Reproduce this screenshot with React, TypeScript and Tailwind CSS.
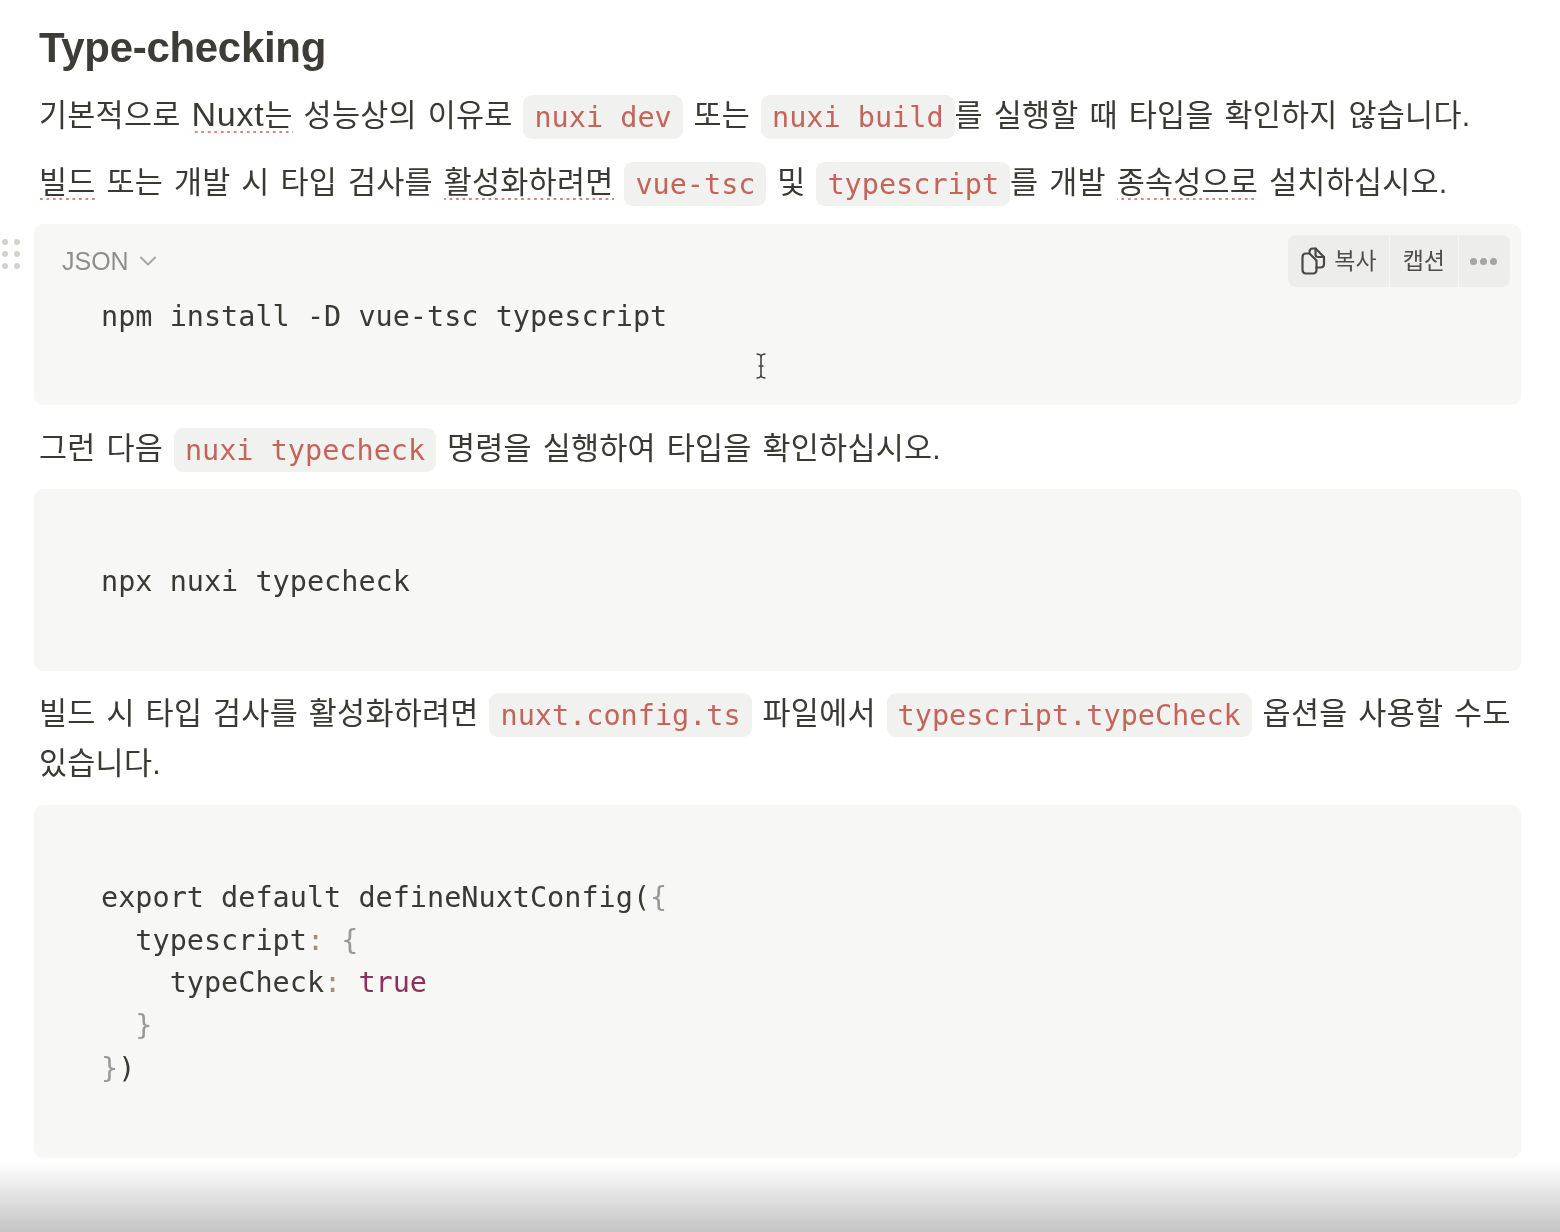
import React from "react";

const KR = "font-['Liberation_Sans','Noto_Sans_CJK_KR',sans-serif]";

function C({ children }: { children: React.ReactNode }) {
  return (
    <code className="align-[-1px] font-['DejaVu_Sans_Mono','Liberation_Mono',monospace] text-[28.5px] text-[#c4655c] bg-[#f1f1ef] rounded-[9px] px-[11px] pt-[6px] pb-[5px] leading-[34px] tracking-normal [word-spacing:0]">
      {children}
    </code>
  );
}

function S({ children }: { children: React.ReactNode }) {
  return (
    <span className="pb-[2px] bg-[radial-gradient(circle,#e0837a_1.2px,transparent_1.5px)] bg-[length:6.5px_4px] bg-repeat-x bg-bottom">
      {children}
    </span>
  );
}

function L({ children }: { children: React.ReactNode }) {
  return <span className="text-[34px] tracking-[0.8px]">{children}</span>;
}

function Para({ className, children }: { className: string; children: React.ReactNode }) {
  return (
    <p className={`${KR} px-[5px] text-[30.5px] leading-[50px] text-[#3a3934] tracking-[0.25px] [word-spacing:2.1px] ${className}`}>
      {children}
    </p>
  );
}

function CopyIcon() {
  return (
    <svg width="26" height="28" viewBox="0 0 26 28" fill="none" stroke="#4a4843" strokeWidth="2.2" strokeLinejoin="round" strokeLinecap="round">
      <path d="M9.5 6.5H6C4 6.5 2.5 8 2.5 10V22.5C2.5 25 4 26.5 6 26.5H13C15 26.5 16.5 25 16.5 22.5V20.5" />
      <path d="M9.5 5C9.5 3 11 1.5 13 1.5H15.5L24 10V17C24 19 22.5 20.5 20.5 20.5H16.5" />
      <path d="M15.5 1.5V7.5C15.5 9 16.5 10 18 10H24" />
      <path d="M9.5 6.5L16.5 13.5V20.5" />
    </svg>
  );
}

function CodeBlock({ className, children }: { className: string; children?: React.ReactNode }) {
  return (
    <div className={`relative mr-[39px] bg-[#f7f7f5] rounded-[9px] ${className}`}>
      {children}
    </div>
  );
}

const mono = "font-['DejaVu_Sans_Mono','Liberation_Mono',monospace] text-[28.5px] leading-[42.7px] text-[#3a3934] whitespace-pre";

export default function App() {
  return (
    <div className="relative w-[1560px] h-[1232px] overflow-hidden bg-white pl-[34px] pt-[18px] blur-[0.5px]">
      <h3 className={`${KR} px-[5px] text-[42px] leading-[60px] font-bold tracking-[-0.3px] text-[#3d3c37] h-[60px]`}>
        Type-checking
      </h3>
      <Para className="mt-[11px]">
        기본적으로 <S><L>Nuxt</L>는</S> 성능상의 이유로 <C>nuxi dev</C> 또는 <C>nuxi build</C>를 실행할 때 타입을 확인하지 않습니다.
      </Para>
      <Para className="mt-[17px]">
        <S>빌드</S> 또는 개발 시 타입 검사를 <S>활성화하려면</S> <C>vue-tsc</C> 및 <C>typescript</C>를 개발 <S>종속성으로</S> 설치하십시오.
      </Para>

      <CodeBlock className="mt-[17px] h-[181px] pl-[28px] pt-[21px]">
        <div className="flex items-center gap-[10px] h-[32px] font-['Liberation_Sans',sans-serif] text-[25px] leading-[32px] text-[#8f8e8a]">
          JSON
          <svg width="18" height="10" viewBox="0 0 18 10" fill="none" stroke="#a8a7a3" strokeWidth="2" strokeLinecap="round" strokeLinejoin="round">
            <path d="M2 1.5L9 8.5L16 1.5" />
          </svg>
        </div>
        <div className={`${mono} pl-[39px] mt-[19px]`}>npm install -D vue-tsc typescript</div>
        <div className={`${KR} absolute right-[11px] top-[11px] flex h-[52px] rounded-[8px] overflow-hidden text-[23px] text-[#4f4d48] gap-[1px]`}>
          <div className="flex items-center gap-[8px] bg-[#ededeb] pl-[12px] pr-[12px]">
            <CopyIcon />
            <span>복사</span>
          </div>
          <div className="flex items-center bg-[#ededeb] px-[13px]">캡션</div>
          <div className="flex items-center gap-[3px] bg-[#ededeb] pl-[11px] pr-[13px]">
            <i className="w-[7px] h-[7px] rounded-full bg-[#a5a4a1]" />
            <i className="w-[7px] h-[7px] rounded-full bg-[#a5a4a1]" />
            <i className="w-[7px] h-[7px] rounded-full bg-[#a5a4a1]" />
          </div>
        </div>
        <svg className="absolute left-[721px] top-[128px]" width="12" height="28" viewBox="0 0 12 28" fill="none" stroke="#444" strokeWidth="1.6">
          <path d="M1.5 2C4 2 6 3 6 5V23C6 25 4 26 1.5 26M10.5 2C8 2 6 3 6 5M6 23C6 25 8 26 10.5 26M3.5 14H8.5" />
        </svg>
      </CodeBlock>

      <Para className="mt-[18px]">
        그런 다음 <C>nuxi typecheck</C> 명령을 실행하여 타입을 확인하십시오.
      </Para>

      <CodeBlock className="mt-[16px] h-[182px] pl-[67px] pt-[72px]">
        <div className={mono}>npx nuxi typecheck</div>
      </CodeBlock>

      <Para className="mt-[17px] pr-[40px]">
        빌드 시 타입 검사를 활성화하려면 <C>nuxt.config.ts</C> 파일에서 <C>typescript.typeCheck</C> 옵션을 사용할 수도 있습니다.
      </Para>

      <CodeBlock className="mt-[17px] h-[353px] pl-[67px] pt-[72px]">
        <div className={mono}>
          {"export default defineNuxtConfig("}
          <span className="text-[#9a9995]">{"{"}</span>
          {"\n  typescript"}
          <span className="text-[#a08d72]">:</span>
          <span className="text-[#9a9995]">{" {"}</span>
          {"\n    typeCheck"}
          <span className="text-[#a08d72]">:</span>
          <span className="text-[#8f2f5c]">{" true"}</span>
          <span className="text-[#9a9995]">{"\n  }\n}"}</span>
          {")"}
        </div>
      </CodeBlock>

      <div className="absolute left-[2px] top-[239px] grid grid-cols-2 gap-[6px]">
        {[0, 1, 2, 3, 4, 5].map((i) => (
          <i key={i} className="w-[6px] h-[6px] rounded-full bg-[#d3d2cf]" />
        ))}
      </div>

      <div className="absolute left-0 right-0 bottom-0 h-[70px] bg-gradient-to-b from-white to-[#c4c4c4]" />
    </div>
  );
}
